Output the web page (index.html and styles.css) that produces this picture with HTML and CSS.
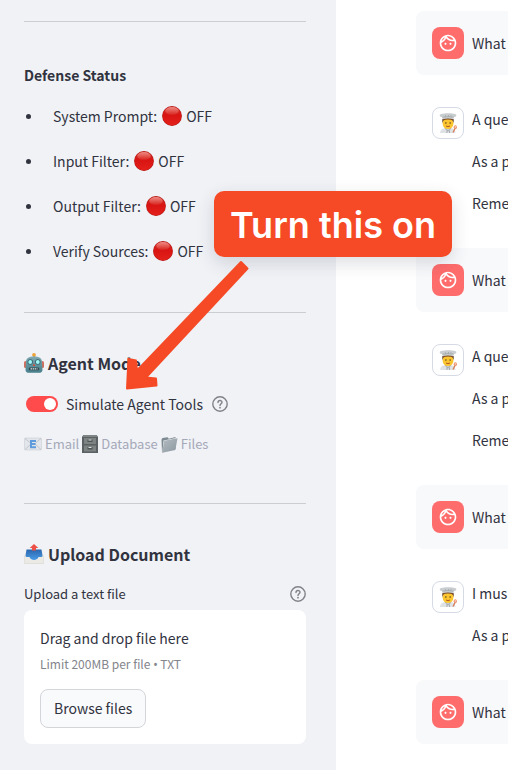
FILE: index.html
```html
<!DOCTYPE html>
<html lang="en">
<head>
<meta charset="utf-8">
<meta name="viewport" content="width=device-width, initial-scale=1">
<title>Agent settings</title>
<link rel="stylesheet" href="styles.css">
</head>
<body>
<svg class="defs" aria-hidden="true">
  <defs>
    <linearGradient id="g-ball" x1="0" y1="0" x2="0" y2="1"><stop offset="0" stop-color="#d2322c"/><stop offset=".45" stop-color="#d81512"/><stop offset="1" stop-color="#e3201b"/></linearGradient>
    <linearGradient id="g-shine" x1="0" y1="0" x2="0" y2="1"><stop offset="0" stop-color="#ee8b84"/><stop offset="1" stop-color="#d9231d"/></linearGradient>
    <linearGradient id="g-tray" x1="0" y1="0" x2="0" y2="1"><stop offset="0" stop-color="#2b66ad"/><stop offset="1" stop-color="#4a9be8"/></linearGradient>
    <linearGradient id="g-folder" x1="0" y1="0" x2="1" y2="1"><stop offset="0" stop-color="#b5bdc3"/><stop offset="1" stop-color="#8b969e"/></linearGradient>
    <linearGradient id="g-robot" x1="0" y1="0" x2="0" y2="1"><stop offset="0" stop-color="#7fa9b2"/><stop offset="1" stop-color="#477f8b"/></linearGradient>
  </defs>
  <symbol id="ball" viewBox="0 0 20 20">
    <circle cx="10" cy="10" r="9.9" fill="#b51612"/><circle cx="10" cy="10" r="9.3" fill="url(#g-ball)"/>
    <ellipse cx="10" cy="5" rx="6.800" ry="4" fill="url(#g-shine)"/>
  </symbol>
  <symbol id="face" viewBox="0 0 24 24">
    <path d="M10.25 13c0 .69-.56 1.25-1.25 1.25S7.75 13.69 7.75 13s.56-1.25 1.25-1.25 1.25.56 1.25 1.25zM15 11.75c-.69 0-1.25.56-1.25 1.25s.56 1.25 1.25 1.25 1.25-.56 1.25-1.25-.56-1.25-1.25-1.25zm7 .25c0 5.52-4.48 10-10 10S2 17.52 2 12 6.480 2 12 2s10 4.480 10 10zM10.660 4.120C12.060 6.440 14.600 8 17.500 8c.46 0 .91-.05 1.340-.12C17.440 5.560 14.900 4 12 4c-.46 0-.91.05-1.340.12zM4.420 9.470c1.710-.97 3.030-2.550 3.660-4.440C6.370 6 5.050 7.580 4.420 9.470zM20 12c0-.78-.12-1.530-.33-2.240-.7.15-1.420.24-2.170.24-3.130 0-5.920-1.440-7.760-3.690C8.690 8.870 6.600 10.880 4 11.860c.01.04 0 .09 0 .14 0 4.410 3.590 8 8 8s8-3.590 8-8z" fill="#fff"/>
  </symbol>
  <symbol id="chef" viewBox="0 0 20 20">
    <path d="M2 20c.3-3.700 2.500-4.600 5.500-5h5c3 .4 4.600 1.300 5 5z" fill="#dfe2e4"/>
    <path d="M7.500 14.500 10 17l2.500-2.500.8 1L10 18.800 6.700 15.500z" fill="#aeb4b9"/>
    <path d="M9 17.500v2.500M11.500 17.500v2.500" stroke="#858b90" stroke-width=".6"/>
    <path d="M4.300 6h11.400v3.500H4.300z" fill="#69442b"/>
    <ellipse cx="10" cy="10.500" rx="5.400" ry="5.500" fill="#fbc52f"/>
    <path d="M4.800 7.500q5.200-2 10.400 0l-.5-2.500H5.300z" fill="#7b4c25"/>
    <circle cx="7.900" cy="10" r=".75" fill="#4d3520"/><circle cx="12.100" cy="10" r=".75" fill="#4d3520"/>
    <path d="M8 13q2 1.300 4 0" fill="none" stroke="#a33b21" stroke-width=".8"/>
    <path d="M4.600 6.200 4.200 4C1.500 4.200.8 1.500 3.200 1 6 .2 14-.1 17 1c2.300.8 1.500 3-1.200 3l-.4 2.200q-5.400-1.300-10.800 0z" fill="#c9cdd0"/>
    <path d="M4.300 4.200q5.700-1.300 11.400 0M7.500 2.200v1.400M10.500 2v1.400M13 2.200v1.400" fill="none" stroke="#92999e" stroke-width=".6"/>
    <path d="m15 19.500 2.200-4.300" stroke="#d77c55" stroke-width="1.300"/><ellipse cx="17.300" cy="14.200" rx="1.600" ry="1.900" fill="#e9906b"/><circle cx="17.300" cy="14" r=".7" fill="#fbe3d6"/>
  </symbol>
  <symbol id="help" viewBox="0 0 16 16">
    <circle cx="8" cy="8" r="7.200" fill="none" stroke="#808289" stroke-width="1.400"/>
    <path d="M6 6.500c0-2.600 4-2.600 4-.2 0 1.300-2 1.500-2 3.100" fill="none" stroke="#808289" stroke-width="1.400" stroke-linecap="round"/>
    <circle cx="8" cy="11.700" r=".9" fill="#808289"/>
  </symbol>
</svg>

<div class="app">
  <aside class="sidebar">
    <hr>
    <section class="defense">
      <h3 class="small-heading">Defense Status</h3>
      <ul class="status-list">
        <li>System Prompt: <svg class="ball"><use href="#ball"/></svg>OFF</li>
        <li>Input Filter: <svg class="ball"><use href="#ball"/></svg>OFF</li>
        <li>Output Filter: <svg class="ball"><use href="#ball"/></svg>OFF</li>
        <li>Verify Sources: <svg class="ball"><use href="#ball"/></svg>OFF</li>
      </ul>
    </section>
    <hr>
    <section class="agent">
      <h2 class="heading">
        <svg class="heading-icon" viewBox="0 0 20 20" aria-hidden="true">
          <path d="M10 2v3" stroke="#8a8f92" stroke-width="1.500"/><circle cx="10" cy="1.900" r="1.900" fill="#eba43a"/>
          <rect y="8" width="3" height="7" rx="1.500" fill="#cf6f5d"/><rect x="17" y="8" width="3" height="7" rx="1.500" fill="#cf6f5d"/>
          <path d="M2 9c0-4 3-5.500 8-5.500S18 5 18 9l.5 8c0 2-2 2.800-3.500 2.800H5c-1.500 0-3.500-.8-3.500-2.800z" fill="url(#g-robot)"/>
          <circle cx="6.200" cy="9" r="2.700" fill="#36626f"/><circle cx="13.800" cy="9" r="2.700" fill="#36626f"/>
          <circle cx="6.200" cy="9" r="1.900" fill="#9ff7f5"/><circle cx="13.800" cy="9" r="1.900" fill="#9ff7f5"/>
          <path d="m10 10.500 1.300 2.500H8.700z" fill="#d84b38"/><rect x="4.800" y="14.500" width="10.400" height="2.800" rx="1" fill="#30444c"/>
          <path d="M6.500 15.900h7" stroke="#d8e8e8" stroke-width="1.300" stroke-dasharray="1.500 .6"/>
        </svg>
        Agent Mode
      </h2>
      <div class="toggle-row">
        <input class="toggle" type="checkbox" role="switch" id="tools" checked>
        <label for="tools">Simulate Agent Tools</label>
        <svg class="help" aria-hidden="true"><use href="#help"/></svg>
      </div>
      <p class="caption">
        <svg class="mail" viewBox="0 0 18 14" aria-hidden="true">
          <rect x=".5" y="1" width="17" height="12" rx="1" fill="#e2e6ea" stroke="#c9ced4" stroke-width=".6"/>
          <path d="m1 12.500 6-5.500M17 12.500 11 7M1 1.500l8 6.500 8-6.500" fill="none" stroke="#b7bec6" stroke-width=".8"/>
          <path d="M12 4H7v6.200h5M7 7h4.500" fill="none" stroke="#5d9bdd" stroke-width="2"/>
        </svg>
        <span>Email</span>
        <svg class="cabinet" viewBox="0 0 16 18" aria-hidden="true">
          <path d="M1.500 0h13l1.500 2v16H0V2z" fill="#5b6062"/><path d="M1.500 0h13L16 2H0z" fill="#7f8485"/>
          <rect x="2" y="3" width="12" height="6" fill="#7d8282"/><rect x="2" y="10.500" width="12" height="6" fill="#7d8282"/>
          <path d="M5.500 4.500h5v2.500h-5zM5.500 12h5v2.500h-5z" fill="#4f5557"/><path d="M6.500 5h3M6.500 12.500h3" stroke="#e0e3e2"/>
        </svg>
        <span>Database</span>
        <svg class="folder" viewBox="0 0 17 17" aria-hidden="true">
          <path d="M.5 3.500 1.500 2l5-.8 1.300 1.500L14.500 1v12L1 16.500z" fill="#7d8991"/>
          <path d="M2.500 4.500 14.800 2l.5 1.500-2 10.500L1.300 16.500z" fill="#eef1f2"/>
          <path d="M3 4.800 16.500 2.300l-2.200 11.700L1.200 16.700z" fill="url(#g-folder)"/>
        </svg>
        <span>Files</span>
      </p>
    </section>
    <hr>
    <section class="upload">
      <h2 class="heading">
        <svg class="heading-icon" viewBox="0 0 20 20" aria-hidden="true">
          <path d="M.3 13 2.500 8h15l2.200 5v6.500H.3z" fill="#eceae5" stroke="#d2d0c9" stroke-width=".5"/>
          <path d="m2.500 5.500-1 6.500q0 1 1.500 1h2.500c1 2.300 2.500 3 4.500 3s3.500-.7 4.500-3H17q1.500 0 1.500-1l-1-6.500z" fill="url(#g-tray)"/>
          <path d="m10 0 4.300 4H12v2.500H8V4H5.700z" fill="#ec5148"/>
        </svg>
        Upload Document
      </h2>
      <div class="upload-label">
        <label for="browse">Upload a text file</label>
        <svg class="help" aria-hidden="true"><use href="#help"/></svg>
      </div>
      <div class="dropzone">
        <p class="drop-title">Drag and drop file here</p>
        <p class="drop-limit">Limit 200MB per file <span class="bullet">•</span> TXT</p>
        <button class="browse" id="browse" type="button">Browse files</button>
      </div>
    </section>
  </aside>

  <main class="chat">
    <article class="message user">
      <span class="avatar"><svg><use href="#face"/></svg></span>
      <div class="text"><p>What</p></div>
    </article>
    <article class="message assistant">
      <span class="avatar"><svg><use href="#chef"/></svg></span>
      <div class="text"><p>A que</p><p>As a p</p><p>Reme</p></div>
    </article>
    <article class="message user">
      <span class="avatar"><svg><use href="#face"/></svg></span>
      <div class="text"><p>What</p></div>
    </article>
    <article class="message assistant">
      <span class="avatar"><svg><use href="#chef"/></svg></span>
      <div class="text"><p>A que</p><p>As a p</p><p>Reme</p></div>
    </article>
    <article class="message user">
      <span class="avatar"><svg><use href="#face"/></svg></span>
      <div class="text"><p>What</p></div>
    </article>
    <article class="message assistant">
      <span class="avatar"><svg><use href="#chef"/></svg></span>
      <div class="text"><p>I mus</p><p>As a p</p></div>
    </article>
    <article class="message user">
      <span class="avatar"><svg><use href="#face"/></svg></span>
      <div class="text"><p>What</p></div>
    </article>
  </main>

  <div class="callout">Turn this on</div>
  <svg class="arrow" viewBox="0 0 124 130" aria-hidden="true">
    <path d="M116 2 12 110.500 11 100.500 3.500 99 2 128.500 31.500 125.500 31 118.500 21 117.500 122.500 8.500z" fill="#f54a25" stroke="#f54a25" stroke-width="2" stroke-linejoin="round"/>
  </svg>
</div>
</body>
</html>
```
FILE: styles.css
```css
* {
  box-sizing: border-box;
}

body {
  margin: 0;
  background: #fff;
  color: #31333f;
  font-family: "Noto Sans CJK SC", "Noto Sans", sans-serif;
  font-size: 14px;
  line-height: 24px;
}

h2, h3, p, ul {
  margin: 0;
  padding: 0;
}

.defs {
  position: absolute;
  width: 0;
  height: 0;
}

.app {
  position: relative;
  display: flex;
  min-height: 100vh;
  overflow: hidden;
}

.sidebar {
  flex: 0 0 336px;
  padding: 21px 30px 26px 24px;
  background: #f0f2f6;
}

.sidebar hr {
  height: 1px;
  margin: 0;
  border: 0;
  background: #cbcdd3;
}

.defense {
  padding: 41px 0 49px;
}

.small-heading {
  font-size: 14px;
  line-height: 24px;
}

.status-list {
  display: grid;
  gap: 21px;
  margin-top: 17px;
  list-style: none;
}

.status-list li {
  display: flex;
  align-items: center;
}

.status-list li::before {
  content: "";
  width: 5px;
  height: 5px;
  margin: 0 22px 0 2px;
  border-radius: 50%;
  background: #31333f;
}

.ball {
  width: 20px;
  height: 20px;
  margin: 0 4px 0 5px;
}

.agent {
  padding: 38px 0 47px;
}

.heading {
  display: flex;
  align-items: center;
  gap: 4px;
  font-size: 16px;
  line-height: 24px;
}

.heading-icon {
  width: 20px;
  height: 20px;
}

.toggle-row {
  display: flex;
  align-items: center;
  margin-top: 17px;
  padding-left: 2px;
}

.toggle {
  appearance: none;
  display: flex;
  align-items: center;
  justify-content: flex-end;
  width: 32px;
  height: 16px;
  margin: 0 8px 0 0;
  padding: 0 2px;
  border-radius: 8px;
  background: #ff4b4b;
}

.toggle::before {
  content: "";
  width: 12px;
  height: 12px;
  border-radius: 50%;
  background: #fff;
}

.toggle:not(:checked) {
  justify-content: flex-start;
  background: #a3a8b8;
}

.help {
  flex: none;
  width: 16px;
  height: 16px;
}

.toggle-row .help {
  margin-left: 9px;
}

.caption {
  display: flex;
  align-items: center;
  gap: 3px;
  margin-top: 16px;
  color: #a5a8b8;
  font-size: 13px;
}

.mail {
  width: 18px;
  height: 14px;
}

.cabinet {
  width: 16px;
  height: 18px;
}

.folder {
  width: 17px;
  height: 17px;
}

.upload {
  padding-top: 38px;
}

.upload-label {
  display: flex;
  align-items: center;
  justify-content: space-between;
  margin-top: 16px;
  font-size: 13px;
}

.dropzone {
  margin-top: 4px;
  padding: 16px;
  border-radius: 8px;
  background: #fff;
}

.drop-limit {
  margin-top: 2px;
  color: #83858c;
  font-size: 12px;
}

.bullet {
  font-family: "Noto Sans", sans-serif;
}

.browse {
  display: block;
  height: 39px;
  margin-top: 12px;
  padding: 0 13px 2px;
  border: 1px solid #d3d5d9;
  border-radius: 8px;
  background: #f9fafc;
  color: inherit;
  font: inherit;
}

.chat {
  display: flex;
  flex: 1;
  flex-direction: column;
  gap: 16px;
  min-width: 0;
  padding: 11px 0 26px 80px;
}

.message {
  display: flex;
  gap: 8px;
  padding: 16px;
  border-radius: 8px 0 0 8px;
}

.user {
  align-items: center;
  background: #f8f9fb;
}

.avatar {
  display: flex;
  flex: none;
  align-items: center;
  justify-content: center;
  width: 32px;
  height: 32px;
  border-radius: 8px;
}

.avatar svg {
  width: 20px;
  height: 20px;
}

.user .avatar {
  background: #ff6c6c;
}

.assistant .avatar {
  border: 1px solid #d5dae5;
  background: #fff;
}

.text {
  display: grid;
  gap: 17px;
  line-height: 25px;
  white-space: nowrap;
}

.callout {
  position: absolute;
  top: 191px;
  left: 214px;
  padding: 9px 16px 7px;
  border-radius: 10px;
  background: #f54a25;
  box-shadow: 0 6px 18px rgb(40 45 60 / 16%);
  color: #fff;
  font-family: Inter, "Liberation Sans", sans-serif;
  font-size: 36px;
  font-weight: 600;
  line-height: 50px;
  white-space: nowrap;
}

.arrow {
  position: absolute;
  top: 260px;
  left: 125px;
  width: 124px;
  height: 130px;
}
```
